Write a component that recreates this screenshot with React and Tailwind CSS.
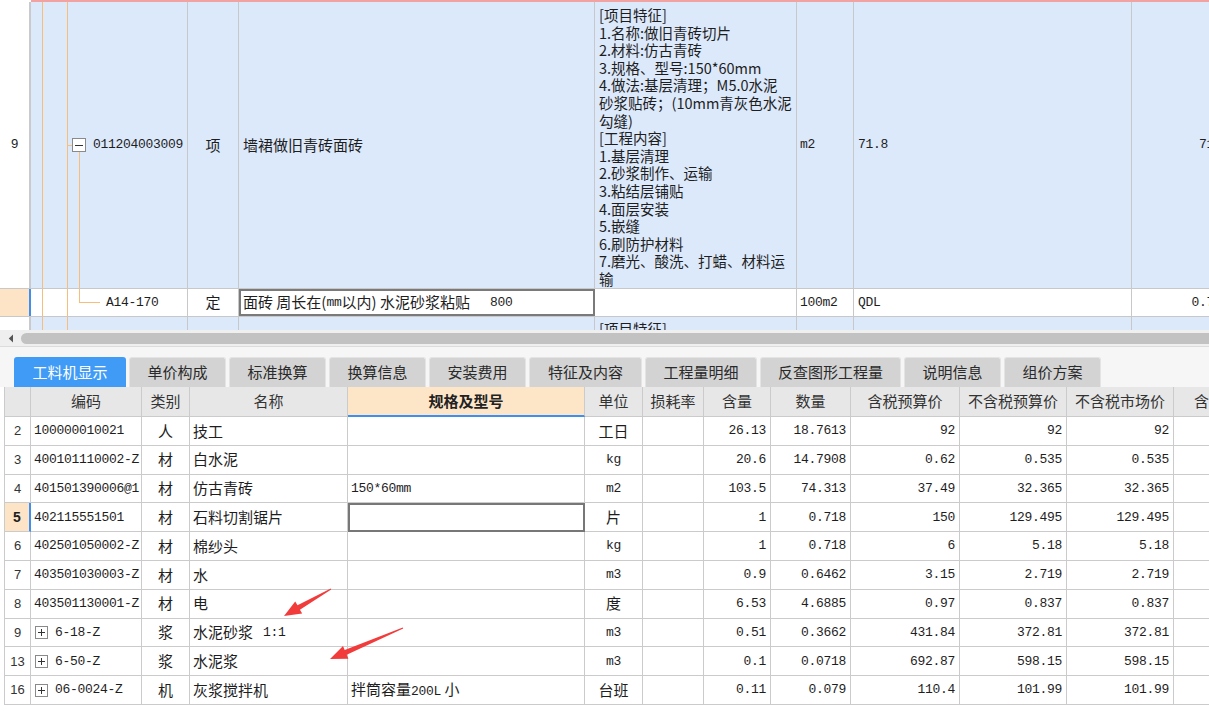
import React from "react";

const cjk = "font-['Noto_Sans_CJK_SC',sans-serif]";
const mono = "font-['Liberation_Mono','Noto_Sans_CJK_SC',monospace]";
const ms = `text-[13px] tracking-[-0.3px] ${mono}`;

const features = [
  "[项目特征]",
  "1.名称:做旧青砖切片",
  "2.材料:仿古青砖",
  "3.规格、型号:150*60mm",
  "4.做法:基层清理；M5.0水泥",
  "砂浆贴砖；(10mm青灰色水泥",
  "勾缝)",
  "[工程内容]",
  "1.基层清理",
  "2.砂浆制作、运输",
  "3.粘结层铺贴",
  "4.面层安装",
  "5.嵌缝",
  "6.刷防护材料",
  "7.磨光、酸洗、打蜡、材料运",
  "输",
];

const tabs = [
  ["工料机显示", "w-[112px]"],
  ["单价构成", "w-[97px]"],
  ["标准换算", "w-[97px]"],
  ["换算信息", "w-[97px]"],
  ["安装费用", "w-[97px]"],
  ["特征及内容", "w-[113px]"],
  ["工程量明细", "w-[112px]"],
  ["反查图形工程量", "w-[141px]"],
  ["说明信息", "w-[97px]"],
  ["组价方案", "w-[97px]"],
];

const cols = [
  { label: "", w: "w-[26px]" },
  { label: "编码", w: "w-[111px]" },
  { label: "类别", w: "w-[48px]" },
  { label: "名称", w: "w-[158px]" },
  { label: "规格及型号", w: "w-[237px]" },
  { label: "单位", w: "w-[58px]" },
  { label: "损耗率", w: "w-[61px]" },
  { label: "含量", w: "w-[67px]" },
  { label: "数量", w: "w-[80px]" },
  { label: "含税预算价", w: "w-[109px]" },
  { label: "不含税预算价", w: "w-[107px]" },
  { label: "不含税市场价", w: "w-[107px]" },
  { label: "含税市场价", w: "w-[116px]" },
];

const rows = [
  { n: "2", code: "100000010021", type: "人", name: "技工", spec: "", unit: "工日", unitMono: false, a: "26.13", b: "18.7613", c: "92", d: "92", e: "92" },
  { n: "3", code: "400101110002-Z", type: "材", name: "白水泥", spec: "", unit: "kg", unitMono: true, a: "20.6", b: "14.7908", c: "0.62", d: "0.535", e: "0.535" },
  { n: "4", code: "401501390006@1", type: "材", name: "仿古青砖", spec: "150*60mm", unit: "m2", unitMono: true, a: "103.5", b: "74.313", c: "37.49", d: "32.365", e: "32.365" },
  { n: "5", code: "402115551501", type: "材", name: "石料切割锯片", spec: "", unit: "片", unitMono: false, a: "1", b: "0.718", c: "150", d: "129.495", e: "129.495", active: true },
  { n: "6", code: "402501050002-Z", type: "材", name: "棉纱头", spec: "", unit: "kg", unitMono: true, a: "1", b: "0.718", c: "6", d: "5.18", e: "5.18" },
  { n: "7", code: "403501030003-Z", type: "材", name: "水", spec: "", unit: "m3", unitMono: true, a: "0.9", b: "0.6462", c: "3.15", d: "2.719", e: "2.719" },
  { n: "8", code: "403501130001-Z", type: "材", name: "电", spec: "", unit: "度", unitMono: false, a: "6.53", b: "4.6885", c: "0.97", d: "0.837", e: "0.837" },
  { n: "9", code: "6-18-Z", plus: true, type: "浆", name: "水泥砂浆", nameTail: "1:1", spec: "", unit: "m3", unitMono: true, a: "0.51", b: "0.3662", c: "431.84", d: "372.81", e: "372.81" },
  { n: "13", code: "6-50-Z", plus: true, type: "浆", name: "水泥浆", spec: "", unit: "m3", unitMono: true, a: "0.1", b: "0.0718", c: "692.87", d: "598.15", e: "598.15" },
  { n: "16", code: "06-0024-Z", plus: true, type: "机", name: "灰浆搅拌机", spec: "machine", unit: "台班", unitMono: false, a: "0.11", b: "0.079", c: "110.4", d: "101.99", e: "101.99" },
];

const TreeLines = () => (
  <>
    <div className="w-[11px] shrink-0" />
    <div className="w-px shrink-0 bg-[#f7bd7a]" />
    <div className="w-[24px] shrink-0" />
    <div className="w-px shrink-0 bg-[#f7bd7a]" />
  </>
);

const PlusBox = () => (
  <div className="w-[13px] h-[13px] border border-[#8a8a8a] bg-white flex items-center justify-center shrink-0">
    <svg width="9" height="9" viewBox="0 0 9 9">
      <path d="M1 4.5h7M4.5 1v7" stroke="#333" strokeWidth="1" />
    </svg>
  </div>
);

const TopGrid = () => (
  <div className="h-[330px] overflow-hidden">
    <div className="flex h-[2px]">
      <div className="w-[31px] shrink-0 bg-white" />
      <div className="flex-1 bg-[#f3a2a2]" />
    </div>

    {/* row 9 */}
    <div className="flex h-[287px] w-[1240px] bg-[#dce9fb] border-b border-[#c8c8c8]">
      <div className={`w-[31px] shrink-0 bg-white border-r-2 border-[#cacaca] flex items-center justify-center ${ms}`}>9</div>
      <div className="w-[157px] shrink-0 flex border-r border-[#c8c8c8]">
        <TreeLines />
        <div className="w-[19px] shrink-0 flex flex-col">
          <div className="flex-1" />
          <div className="flex items-center h-[14px]">
            <div className="w-[4px] h-px bg-[#f7bd7a]" />
            <div className="w-[14px] h-[14px] border border-[#8a8a8a] bg-white flex items-center justify-center">
              <div className="w-[8px] h-px bg-[#333]" />
            </div>
          </div>
          <div className="flex-1 ml-[11px] w-px bg-[#f7bd7a]" />
        </div>
        <div className={`flex items-center pl-[6px] ${ms}`}>011204003009</div>
      </div>
      <div className={`w-[51px] shrink-0 border-r border-[#c8c8c8] flex items-center justify-center text-[15px] ${cjk}`}>项</div>
      <div className={`w-[356px] shrink-0 border-r border-[#c8c8c8] flex items-center pl-[4px] text-[15px] ${cjk}`}>墙裙做旧青砖面砖</div>
      <div className={`w-[202px] shrink-0 border-r border-[#c8c8c8] pt-[4px] pl-[4px] text-[14.5px] leading-[17.6px] ${cjk}`}>
        {features.map((l, i) => (
          <div key={i} className="whitespace-nowrap">{l}</div>
        ))}
      </div>
      <div className={`w-[57px] shrink-0 border-r border-[#c8c8c8] flex items-center pl-[3px] ${ms}`}>m2</div>
      <div className={`w-[278px] shrink-0 border-r border-[#c8c8c8] flex items-center pl-[4px] ${ms}`}>71.8</div>
      <div className={`w-[100px] shrink-0 flex items-center justify-end pr-[3px] ${ms}`}>71.8</div>
    </div>

    {/* row A14-170 */}
    <div className="flex h-[28px] w-[1240px] bg-white border-b border-[#c8c8c8]">
      <div className="w-[31px] shrink-0 bg-[#fde4c6] border-r-2 border-[#3d8ff0]" />
      <div className="w-[157px] shrink-0 flex border-r border-[#c8c8c8]">
        <TreeLines />
        <div className="w-[11px] shrink-0" />
        <div className="w-[21px] h-[14px] shrink-0 border-l border-b border-[#f7bd7a]" />
        <div className={`flex items-center pl-[6px] ${ms}`}>A14-170</div>
      </div>
      <div className={`w-[51px] shrink-0 border-r border-[#c8c8c8] flex items-center justify-center text-[15px] ${cjk}`}>定</div>
      <div className={`w-[356px] shrink-0 border-2 border-[#7a7a7a] flex items-center pl-[2px] text-[15px] whitespace-nowrap ${cjk}`}>
        面砖 周长在(<span className={ms}>mm</span>以内) 水泥砂浆粘贴<span className={`ml-[20px] ${ms}`}>800</span>
      </div>
      <div className="w-[202px] shrink-0 border-r border-[#c8c8c8]" />
      <div className={`w-[57px] shrink-0 border-r border-[#c8c8c8] flex items-center pl-[3px] ${ms}`}>100m2</div>
      <div className={`w-[278px] shrink-0 border-r border-[#c8c8c8] flex items-center pl-[4px] ${ms}`}>QDL</div>
      <div className={`w-[100px] shrink-0 flex items-center justify-end pr-[3px] ${ms}`}>0.718</div>
    </div>

    {/* next row, clipped */}
    <div className="flex h-[40px] w-[1240px] bg-[#dce9fb]">
      <div className="w-[31px] shrink-0 bg-white border-r-2 border-[#cacaca]" />
      <div className="w-[157px] shrink-0 flex border-r border-[#c8c8c8]">
        <TreeLines />
      </div>
      <div className="w-[51px] shrink-0 border-r border-[#c8c8c8]" />
      <div className="w-[356px] shrink-0 border-r border-[#c8c8c8]" />
      <div className={`w-[202px] shrink-0 border-r border-[#c8c8c8] pt-[3px] pl-[4px] text-[14.5px] leading-[17.6px] ${cjk}`}>[项目特征]</div>
      <div className="w-[57px] shrink-0 border-r border-[#c8c8c8]" />
      <div className="w-[278px] shrink-0 border-r border-[#c8c8c8]" />
      <div className="w-[100px] shrink-0" />
    </div>
  </div>
);

const Scrollbar = () => (
  <div className="h-[17px] bg-[#efefef] border-b border-[#dcdcdc] flex items-center">
    <div className="w-[21px] shrink-0 flex items-center justify-center">
      <svg width="6" height="9" viewBox="0 0 6 9">
        <path d="M5 0.5L0.8 4.5L5 8.5Z" fill="#555" />
      </svg>
    </div>
    <div className="flex-1 h-[11px] rounded-l-full bg-[#c2c2c2]" />
  </div>
);

const Tabs = () => (
  <div className="h-[40px] bg-[#f6f6f6] flex items-end pl-[14px] gap-[3px]">
    {tabs.map(([label, w], i) => (
      <div
        key={label}
        className={`${w} h-[30px] shrink-0 rounded-t-[3px] flex items-center justify-center text-[15px] ${cjk} ${
          i === 0 ? "bg-[#3f9bf6] text-white" : "bg-[#d3d3d3] border border-b-0 border-[#e4e4e4] text-[#2a2a2a]"
        }`}
      >
        {label}
      </div>
    ))}
  </div>
);

const Cell = ({ w, className = "", children }) => (
  <div className={`${w} shrink-0 h-full border-r border-b border-[#cbcbcb] flex items-center ${className}`}>{children}</div>
);

const BottomGrid = () => (
  <div className="ml-[4px] w-[1290px]">
    <div className="flex h-[30px] bg-[#e7e7e7] border-l border-[#cbcbcb]">
      {cols.map((c, i) => (
        <div
          key={i}
          className={`${c.w} shrink-0 h-full border-r border-[#cbcbcb] flex items-center justify-center text-[15px] ${cjk} ${
            i === 4 ? "bg-[#fde6c8] font-bold border-b-2 border-b-[#3d8ff0] text-[#222]" : "border-b text-[#333]"
          }`}
        >
          {c.label}
        </div>
      ))}
    </div>
    {rows.map((r) => (
      <div key={r.n} className="flex h-[28.8px] bg-white border-l border-[#cbcbcb]">
        <Cell
          w="w-[26px]"
          className={`justify-center text-[13px] font-['Liberation_Sans',sans-serif] ${
            r.active ? "bg-[#fde4c6] font-bold text-[14px] border-r-2 border-r-[#3d8ff0]" : "text-[#333]"
          }`}
        >
          {r.n}
        </Cell>
        <Cell w="w-[111px]" className={`pl-[3px] whitespace-nowrap ${ms}`}>
          {r.plus ? (
            <>
              <div className="ml-[1px] mr-[7px]">
                <PlusBox />
              </div>
              {r.code}
            </>
          ) : (
            r.code
          )}
        </Cell>
        <Cell w="w-[48px]" className={`justify-center text-[15px] ${cjk}`}>{r.type}</Cell>
        <Cell w="w-[158px]" className={`pl-[3px] text-[15px] whitespace-nowrap ${cjk}`}>
          {r.name}
          {r.nameTail && <span className={`ml-[10px] ${ms}`}>{r.nameTail}</span>}
        </Cell>
        {r.active ? (
          <div className="w-[237px] shrink-0 h-full border-2 border-[#777] bg-white" />
        ) : (
          <Cell w="w-[237px]" className="pl-[3px] whitespace-nowrap">
            {r.spec === "machine" ? (
              <span className={`text-[15px] ${cjk}`}>
                拌筒容量<span className={ms}>200L</span> 小
              </span>
            ) : (
              <span className={ms}>{r.spec}</span>
            )}
          </Cell>
        )}
        <Cell w="w-[58px]" className={`justify-center ${r.unitMono ? ms : `text-[15px] ${cjk}`}`}>{r.unit}</Cell>
        <Cell w="w-[61px]" />
        <Cell w="w-[67px]" className={`justify-end pr-[4px] ${ms}`}>{r.a}</Cell>
        <Cell w="w-[80px]" className={`justify-end pr-[4px] ${ms}`}>{r.b}</Cell>
        <Cell w="w-[109px]" className={`justify-end pr-[4px] ${ms}`}>{r.c}</Cell>
        <Cell w="w-[107px]" className={`justify-end pr-[4px] ${ms}`}>{r.d}</Cell>
        <Cell w="w-[107px]" className={`justify-end pr-[4px] ${ms}`}>{r.e}</Cell>
        <Cell w="w-[116px]" />
      </div>
    ))}
  </div>
);

const Arrows = () => (
  <svg className="absolute inset-0 pointer-events-none" width="1209" height="717" viewBox="0 0 1209 717">
    <polygon
      points="330.8,588.6 297.5,605.3 295.2,601.4 284,616 302.2,613.6 299.9,609.7 331.2,589.4"
      fill="#f23b3b"
    />
    <polygon
      points="402.8,627.5 344.7,650.1 343,645.9 330,659 348.4,658.8 346.7,654.7 403.2,628.5"
      fill="#f23b3b"
    />
  </svg>
);

export default function App() {
  return (
    <div className="relative w-[1209px] h-[717px] overflow-hidden bg-white text-[#1e1e1e]">
      <TopGrid />
      <Scrollbar />
      <Tabs />
      <BottomGrid />
      <Arrows />
    </div>
  );
}
